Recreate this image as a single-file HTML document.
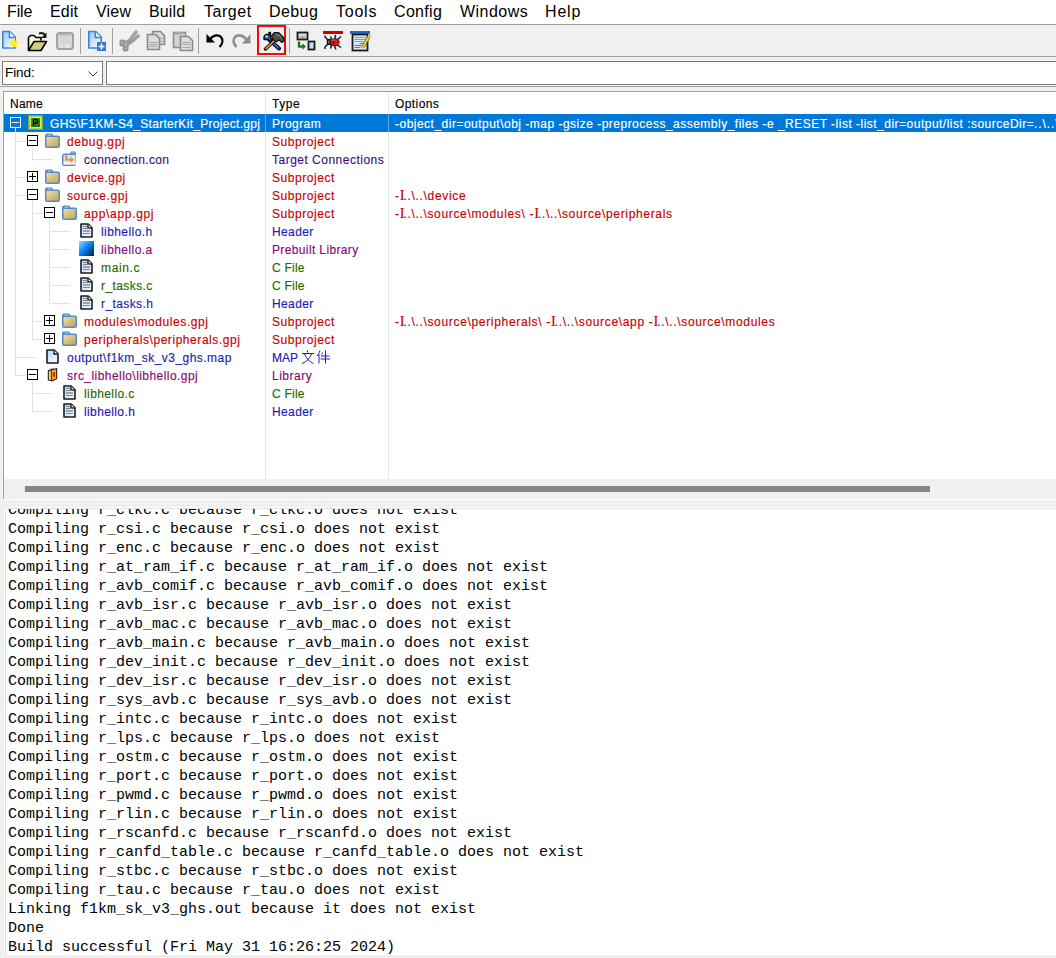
<!DOCTYPE html>
<html><head><meta charset="utf-8">
<style>
*{box-sizing:border-box}
html,body{margin:0;padding:0;width:1056px;height:958px;overflow:hidden;background:#f0f0f0;font-family:"Liberation Sans",sans-serif}
body{position:relative}
.abs,.tx,.ic,.ln,.sep{position:absolute}
.tx{white-space:pre;-webkit-text-stroke:0.15px currentColor}
.sep{width:1px;background:#a0a0a0}
#menu{left:0;top:0;width:1056px;height:24px;background:#fff}
</style></head><body>
<div class="abs" style="left:0;top:0;width:1056px;height:24px;background:#fff"></div>
<div class="abs" style="left:0;top:24px;width:1056px;height:1px;background:#a0a0a0"></div>
<div class="abs" style="left:0;top:56px;width:1056px;height:1px;background:#a0a0a0"></div>
<div class="abs" style="left:0;top:86px;width:1056px;height:1px;background:#a0a0a0"></div>
<svg class="ic" style="left:1px;top:30px" width="21" height="20" viewBox="0 0 21 20"><defs><linearGradient id="nfg" x1="0" y1="0" x2="1" y2="1"><stop offset="0" stop-color="#9cc8f8"/><stop offset="1" stop-color="#ffffff"/></linearGradient></defs><path d="M1.8 1.5h7l5.5 5.5v11H1.8z" fill="url(#nfg)" stroke="#3a82dc" stroke-width="1.6" stroke-linejoin="round"/><path d="M8.3 1.5v6h6" fill="#e8f2ff" stroke="#3a82dc" stroke-width="1.4"/><path d="M13 8l1.5 3.6 3.9.3-3 2.5.9 3.8L13 16.1l-3.3 2.1.9-3.8-3-2.5 3.9-.3z" fill="#fff200" stroke="#f8f070" stroke-width=".5"/></svg>
<svg class="ic" style="left:27px;top:31px" width="21" height="21" viewBox="0 0 21 21"><defs><linearGradient id="ofg" x1="0" y1="0" x2="0" y2="1"><stop offset="0" stop-color="#ffffff"/><stop offset="1" stop-color="#f0f090"/></linearGradient></defs><path d="M1.5 19.5V6.5l2-2h3.5l2 2h5v3" fill="url(#ofg)" stroke="#000" stroke-width="1.6" stroke-linejoin="round"/><path d="M1.5 19.5l5.5-9h12.5l-5.5 9z" fill="#d2cc80" stroke="#000" stroke-width="1.6" stroke-linejoin="round"/><path d="M12 2.5c2.5-1 4.5-.5 6 1.5" fill="none" stroke="#1a1a1a" stroke-width="2"/><path d="M19.5 1.5v5.5h-5.5z" fill="#1a1a1a"/></svg>
<svg class="ic" style="left:56px;top:32px" width="18" height="18" viewBox="0 0 18 18"><defs></defs><rect x="1" y="1" width="16" height="16" rx="2.5" fill="#d6d6d6" stroke="#a2a2a2" stroke-width="2"/><rect x="4" y="1.5" width="10" height="2" fill="#b4b4b4"/><rect x="4" y="12.5" width="3" height="3.5" fill="#e4e4e4"/><rect x="9" y="12.5" width="5" height="3.5" fill="#e4e4e4"/></svg>
<div class="sep" style="left:80px;top:28px;height:26px"></div>
<div class="sep" style="left:112px;top:28px;height:26px"></div>
<div class="sep" style="left:198px;top:28px;height:26px"></div>
<div class="sep" style="left:289px;top:28px;height:26px"></div>
<svg class="ic" style="left:87px;top:30px" width="20" height="22" viewBox="0 0 20 22"><defs></defs><path d="M1.8 1.5h7l5.5 5.5v11H1.8z" fill="url(#nfg)" stroke="#3a82dc" stroke-width="1.6" stroke-linejoin="round"/><path d="M8.3 1.5v6h6" fill="#e8f2ff" stroke="#3a82dc" stroke-width="1.4"/><rect x="10" y="12" width="9" height="9" fill="#2f78d0"/><path d="M14.5 13.5v6M11.5 16.5h6" stroke="#fff" stroke-width="1.6"/></svg>
<svg class="ic" style="left:118px;top:30px" width="22" height="22" viewBox="0 0 22 22"><defs></defs><path d="M11 11L18 2" stroke="#a6a6a6" stroke-width="3.6" stroke-linecap="round"/><path d="M12.5 12.5L20 6" stroke="#a2a2a2" stroke-width="3.6" stroke-linecap="round"/><path d="M4 13L12 11M8 18L12 11" stroke="#9a9a9a" stroke-width="3" stroke-linecap="round"/><rect x="1.5" y="9.5" width="6" height="7" rx="2" fill="#969696"/><rect x="4.5" y="15.5" width="6" height="6" rx="2" fill="#969696"/><circle cx="4.3" cy="12.7" r="1" fill="#b4b4b4"/><circle cx="7.5" cy="18.5" r="1" fill="#b4b4b4"/></svg>
<svg class="ic" style="left:146px;top:30px" width="20" height="21" viewBox="0 0 20 21"><defs></defs><path d="M6.5 1.5h8l4 4v9h-12z" fill="#d8d8d8" stroke="#8a8a8a" stroke-width="1.6"/><path d="M1.5 4.5h8l4 4v11h-12z" fill="#dcdcdc" stroke="#8a8a8a" stroke-width="1.6"/><path d="M3.5 12.5h8M3.5 14.5h8M3.5 16.5h8M14 8.5h3M14 11.5h3" stroke="#a8a8a8" stroke-width="1"/></svg>
<svg class="ic" style="left:172px;top:31px" width="22" height="21" viewBox="0 0 22 21"><defs></defs><rect x="1.5" y="1.5" width="12" height="15" fill="#d2d2d2" stroke="#8c8c8c" stroke-width="1.6"/><rect x="3" y="1" width="8" height="2.5" fill="#a8a8a8"/><path d="M8.5 5.5h8l4 4v10h-12z" fill="#dedede" stroke="#8a8a8a" stroke-width="1.6"/><path d="M10.5 11.5h8M10.5 13.5h8M10.5 16.5h8" stroke="#a6a6a6" stroke-width="1"/></svg>
<svg class="ic" style="left:205px;top:33px" width="20" height="16" viewBox="0 0 20 16"><defs></defs><path d="M5 6.5C7 2.5 13 1 16 4C18.5 7 17.5 11 14.5 14" fill="none" stroke="#000" stroke-width="2.3"/><path d="M1.5 1v8.5h8.5z" fill="#000"/></svg>
<svg class="ic" style="left:232px;top:33px" width="20" height="16" viewBox="0 0 20 16"><defs></defs><path d="M14 6.5C12 2.5 6 1 3 4C0.5 7 1.5 11 4.5 14" fill="none" stroke="#8e8e8e" stroke-width="2.6"/><path d="M18.5 1v9.5h-8.5z" fill="#8e8e8e"/></svg>
<div style="position:absolute;left:257px;top:25px;width:29px;height:30px;border:2px solid #f80808;background:#eef1f2"></div>
<svg class="ic" style="left:263px;top:31px" width="22" height="20" viewBox="0 0 22 20"><defs></defs><path d="M6 8.5L16 17.5" stroke="#000" stroke-width="3.8" stroke-linecap="round"/><path d="M6 8.5L16 17.5" stroke="#2a62d8" stroke-width="2"/><path d="M1 5.5L3 3.5H6V1.5H7.5V7L9.5 9L7.5 11L5 8.5H1z" fill="#2a5ad0" stroke="#000" stroke-width="1.3" stroke-linejoin="round"/><rect x="2.5" y="4.5" width="2" height="2" fill="#e8f0ff"/><path d="M2.5 18L12.5 8.5" stroke="#1a1000" stroke-width="3.4" stroke-linecap="round"/><path d="M2.5 18L12.5 8.5" stroke="#f0a030" stroke-width="1.6"/><path d="M8.5 5L11.5 1.5H15.5L20.5 6.5L21.5 9.5L19 11.5L16 9L13 11L10 8z" fill="#505050" stroke="#111" stroke-width="1.2" stroke-linejoin="round"/><path d="M13 4h3l2 2" stroke="#8a8a8a" stroke-width="1" fill="none"/></svg>
<svg class="ic" style="left:296px;top:31px" width="20" height="20" viewBox="0 0 20 20"><defs></defs><rect x="1.5" y="1.5" width="10" height="7" fill="#c8d8e8" stroke="#1c1c1c" stroke-width="1.8"/><path d="M5 5.5h4v1.5h-5z" fill="#e88a20"/><path d="M3 10.5v5h4" fill="none" stroke="#1e7a1e" stroke-width="2.4"/><path d="M6.5 12.2l3.5 3.3-3.5 3.3z" fill="#1e7a1e"/><rect x="12.5" y="10.5" width="6" height="8" fill="#c4e0fa" stroke="#1c1c1c" stroke-width="1.8"/></svg>
<svg class="ic" style="left:322px;top:30px" width="22" height="21" viewBox="0 0 22 21"><defs></defs><rect x="1" y="1" width="20" height="3" rx="0.5" fill="#d00000"/><path d="M5.5 9.5L3 7V5.5M9.5 9L8.5 6.5M12.5 9L13.5 6.5L13 5M15.5 9.5L19 6.5M5.5 14.5L3 17V19M9.5 15.5L8.5 18.5M12.5 15.5L13.5 18.5L14 19.5M15.5 15L19 17.5" fill="none" stroke="#141414" stroke-width="1.4"/><rect x="4.8" y="9" width="3.8" height="6" fill="#111"/><rect x="6" y="10.5" width="1.6" height="3" fill="#707070"/><path d="M8.5 9H15.5Q19 12 15.5 15.5H8.5z" fill="#e81010" stroke="#1a1a1a" stroke-width="0.9"/><path d="M9.5 10H13" stroke="#ff6060" stroke-width="1"/><ellipse cx="11.5" cy="12.3" rx="0.8" ry="1.3" fill="#000"/></svg>
<svg class="ic" style="left:349px;top:30px" width="22" height="22" viewBox="0 0 22 22"><defs></defs><rect x="1" y="1" width="20" height="3" fill="#1a6ad6"/><rect x="3.5" y="4.5" width="15" height="16" fill="#d8e8f8" stroke="#1c1c1c" stroke-width="1.8"/><path d="M5.5 7.5h11M5.5 9.5h11M5.5 11.5h9" stroke="#8a9aa8" stroke-width="1"/><path d="M10.5 13.5h5M5.5 15.5h7M5.5 17.5h6" stroke="#f04a20" stroke-width="1"/><path d="M13.5 17.5l6.5-11" stroke="#6a5000" stroke-width="3.4"/><path d="M13.5 17.5l6.5-11" stroke="#f6d030" stroke-width="2"/><path d="M20 6.5l1-2" stroke="#f0a0a0" stroke-width="2.5"/></svg>
<div class="abs" style="left:2px;top:61px;width:101px;height:24px;background:#fff;border:1px solid #7a7a7a"></div>
<svg class="ic" style="left:88px;top:71px" width="10" height="6" viewBox="0 0 10 6"><path d="M0.5 0.5l4.5 4.5 4.5-4.5" fill="none" stroke="#404040" stroke-width="1"/></svg>
<span class="tx" style="left:5px;top:65px;font-size:13.6px;line-height:16px;color:#000;letter-spacing:-0.1px;-webkit-text-stroke:0">Find:</span>
<div class="abs" style="left:106px;top:61px;width:960px;height:24px;background:#fff;border:1px solid #7a7a7a"></div>
<div class="abs" style="left:3px;top:91px;width:1060px;height:408px;background:#fff;border-left:1px solid #a0a0a0;border-top:1px solid #a0a0a0"></div>
<div class="abs" style="left:4px;top:114px;width:1052px;height:18px;background:#0078d7"></div>
<div class="ln" style="left:265px;top:92px;width:1px;height:387px;background:#e5e5e5"></div>
<div class="ln" style="left:388px;top:92px;width:1px;height:387px;background:#e5e5e5"></div>
<div class="ln" style="left:265px;top:114px;width:1px;height:18px;background:#5aa6e6"></div>
<div class="ln" style="left:388px;top:114px;width:1px;height:18px;background:#5aa6e6"></div>
<div class="ln" style="left:15px;top:128px;width:1px;height:4px;background:#cfe4f6"></div><div class="ln" style="left:15px;top:132px;width:1px;height:244px;background:#e2e2e2"></div><div class="ln" style="left:15px;top:141px;width:10px;height:1px;background:#e2e2e2"></div><div class="ln" style="left:15px;top:177px;width:10px;height:1px;background:#e2e2e2"></div><div class="ln" style="left:15px;top:195px;width:10px;height:1px;background:#e2e2e2"></div><div class="ln" style="left:15px;top:375px;width:10px;height:1px;background:#e2e2e2"></div><div class="ln" style="left:15px;top:357px;width:21px;height:1px;background:#e2e2e2"></div><div class="ln" style="left:32px;top:146px;width:1px;height:14px;background:#e2e2e2"></div><div class="ln" style="left:32px;top:159px;width:21px;height:1px;background:#e2e2e2"></div><div class="ln" style="left:32px;top:182px;width:1px;height:158px;background:#e2e2e2"></div><div class="ln" style="left:32px;top:213px;width:10px;height:1px;background:#e2e2e2"></div><div class="ln" style="left:32px;top:321px;width:10px;height:1px;background:#e2e2e2"></div><div class="ln" style="left:32px;top:339px;width:10px;height:1px;background:#e2e2e2"></div><div class="ln" style="left:49px;top:218px;width:1px;height:86px;background:#e2e2e2"></div><div class="ln" style="left:49px;top:231px;width:21px;height:1px;background:#e2e2e2"></div><div class="ln" style="left:49px;top:249px;width:21px;height:1px;background:#e2e2e2"></div><div class="ln" style="left:49px;top:267px;width:21px;height:1px;background:#e2e2e2"></div><div class="ln" style="left:49px;top:285px;width:21px;height:1px;background:#e2e2e2"></div><div class="ln" style="left:49px;top:303px;width:21px;height:1px;background:#e2e2e2"></div><div class="ln" style="left:32px;top:380px;width:1px;height:32px;background:#e2e2e2"></div><div class="ln" style="left:32px;top:393px;width:21px;height:1px;background:#e2e2e2"></div><div class="ln" style="left:32px;top:411px;width:21px;height:1px;background:#e2e2e2"></div>
<div style="position:absolute;left:10px;top:117px;width:11px;height:11px;border:1px solid #fff;background:transparent"><div style="position:absolute;left:1px;top:4px;width:7px;height:1px;background:#fff"></div></div><div style="position:absolute;left:27px;top:135px;width:11px;height:11px;border:1px solid #000;background:#fff"><div style="position:absolute;left:1px;top:4px;width:7px;height:1px;background:#000"></div></div><div style="position:absolute;left:27px;top:171px;width:11px;height:11px;border:1px solid #000;background:#fff"><div style="position:absolute;left:1px;top:4px;width:7px;height:1px;background:#000"></div><div style="position:absolute;left:4px;top:1px;width:1px;height:7px;background:#000"></div></div><div style="position:absolute;left:27px;top:189px;width:11px;height:11px;border:1px solid #000;background:#fff"><div style="position:absolute;left:1px;top:4px;width:7px;height:1px;background:#000"></div></div><div style="position:absolute;left:44px;top:207px;width:11px;height:11px;border:1px solid #000;background:#fff"><div style="position:absolute;left:1px;top:4px;width:7px;height:1px;background:#000"></div></div><div style="position:absolute;left:44px;top:315px;width:11px;height:11px;border:1px solid #000;background:#fff"><div style="position:absolute;left:1px;top:4px;width:7px;height:1px;background:#000"></div><div style="position:absolute;left:4px;top:1px;width:1px;height:7px;background:#000"></div></div><div style="position:absolute;left:44px;top:333px;width:11px;height:11px;border:1px solid #000;background:#fff"><div style="position:absolute;left:1px;top:4px;width:7px;height:1px;background:#000"></div><div style="position:absolute;left:4px;top:1px;width:1px;height:7px;background:#000"></div></div><div style="position:absolute;left:27px;top:369px;width:11px;height:11px;border:1px solid #000;background:#fff"><div style="position:absolute;left:1px;top:4px;width:7px;height:1px;background:#000"></div></div>
<svg class="ic" style="left:28px;top:115px" width="15" height="15" viewBox="0 0 15 15"><defs><linearGradient id="pg" x1="0" y1="0" x2="1" y2="1"><stop offset="0" stop-color="#4a9e08"/><stop offset="1" stop-color="#2a6a00"/></linearGradient></defs><rect x="0" y="0" width="15" height="15" fill="#86a82e"/><rect x="1" y="1" width="13" height="13" fill="#a6d460"/><rect x="2" y="2" width="11" height="11" fill="#c4ec8c"/><rect x="3" y="3" width="9" height="9" fill="url(#pg)"/><path d="M5.5 11V4.5h2.4a1.8 1.8 0 0 1 0 3.6H5.5" fill="none" stroke="#000" stroke-width="1.3"/></svg>
<svg class="ic" style="left:45px;top:133px" width="15" height="15" viewBox="0 0 15 15"><defs><linearGradient id="fg" x1="0" y1="0" x2="1" y2="1"><stop offset="0" stop-color="#efe0a0"/><stop offset="1" stop-color="#bfa55a"/></linearGradient></defs><path d="M3 0.5h4l1.5 2H13a2 2 0 0 1 2 2V13a2 2 0 0 1-2 2H2a2 2 0 0 1-2-2V2.5a2 2 0 0 1 2-2z" fill="#4f8ad2"/><rect x="2.5" y="1.5" width="4" height="1.5" fill="#a9b8a8"/><rect x="1.5" y="4" width="12" height="9.5" fill="url(#fg)"/></svg>
<svg class="ic" style="left:62px;top:151px" width="15" height="15" viewBox="0 0 15 15"><defs></defs><path d="M2 2.5h6l1-2h3a2 2 0 0 1 2 2V13a2 2 0 0 1-2 2H2a2 2 0 0 1-2-2V4.5a2 2 0 0 1 2-2z" fill="#4f8ad2"/><rect x="9.5" y="1" width="3" height="1.5" fill="#9ab0c0"/><rect x="1.5" y="4" width="12" height="9.5" fill="#d4e8fc"/><rect x="1.5" y="11" width="12" height="2.5" fill="#eef6ff"/><path d="M3 4.5h2.4v3.3h3.2V5.6l3.4 3.2-3.4 3.2v-2.2H3z" fill="#f29420"/></svg>
<svg class="ic" style="left:45px;top:169px" width="15" height="15" viewBox="0 0 15 15"><defs><linearGradient id="fg" x1="0" y1="0" x2="1" y2="1"><stop offset="0" stop-color="#efe0a0"/><stop offset="1" stop-color="#bfa55a"/></linearGradient></defs><path d="M3 0.5h4l1.5 2H13a2 2 0 0 1 2 2V13a2 2 0 0 1-2 2H2a2 2 0 0 1-2-2V2.5a2 2 0 0 1 2-2z" fill="#4f8ad2"/><rect x="2.5" y="1.5" width="4" height="1.5" fill="#a9b8a8"/><rect x="1.5" y="4" width="12" height="9.5" fill="url(#fg)"/></svg>
<svg class="ic" style="left:45px;top:187px" width="15" height="15" viewBox="0 0 15 15"><defs><linearGradient id="fg" x1="0" y1="0" x2="1" y2="1"><stop offset="0" stop-color="#efe0a0"/><stop offset="1" stop-color="#bfa55a"/></linearGradient></defs><path d="M3 0.5h4l1.5 2H13a2 2 0 0 1 2 2V13a2 2 0 0 1-2 2H2a2 2 0 0 1-2-2V2.5a2 2 0 0 1 2-2z" fill="#4f8ad2"/><rect x="2.5" y="1.5" width="4" height="1.5" fill="#a9b8a8"/><rect x="1.5" y="4" width="12" height="9.5" fill="url(#fg)"/></svg>
<svg class="ic" style="left:62px;top:205px" width="15" height="15" viewBox="0 0 15 15"><defs><linearGradient id="fg" x1="0" y1="0" x2="1" y2="1"><stop offset="0" stop-color="#efe0a0"/><stop offset="1" stop-color="#bfa55a"/></linearGradient></defs><path d="M3 0.5h4l1.5 2H13a2 2 0 0 1 2 2V13a2 2 0 0 1-2 2H2a2 2 0 0 1-2-2V2.5a2 2 0 0 1 2-2z" fill="#4f8ad2"/><rect x="2.5" y="1.5" width="4" height="1.5" fill="#a9b8a8"/><rect x="1.5" y="4" width="12" height="9.5" fill="url(#fg)"/></svg>
<svg class="ic" style="left:80px;top:223px" width="13" height="15" viewBox="0 0 13 15"><defs><linearGradient id="flg" x1="0" y1="0" x2="1" y2="1"><stop offset="0" stop-color="#b8d8fa"/><stop offset="1" stop-color="#f4faff"/></linearGradient></defs><path d="M1 1h7.2L12 4.8V14H1z" fill="url(#flg)" stroke="#1c1c1c" stroke-width="1.6" stroke-linejoin="round"/><path d="M8 1.2V5h3.8" fill="#fff" stroke="#1c1c1c" stroke-width="1.4"/><rect x="3" y="3" width="4" height="1" fill="#7c8a98"/><rect x="3" y="5" width="6.5" height="1" fill="#7c8a98"/><rect x="3" y="7" width="7" height="2" fill="#98a4b0"/><rect x="3" y="10" width="7" height="1" fill="#7c8a98"/></svg>
<svg class="ic" style="left:79px;top:241px" width="15" height="15" viewBox="0 0 15 15"><defs><linearGradient id="lg" x1="0" y1="0" x2="1" y2="1"><stop offset="0" stop-color="#a8d4ff"/><stop offset="0.45" stop-color="#0a86ff"/><stop offset="1" stop-color="#001c44"/></linearGradient></defs><rect x="0" y="0" width="15" height="15" fill="url(#lg)"/></svg>
<svg class="ic" style="left:80px;top:259px" width="13" height="15" viewBox="0 0 13 15"><defs><linearGradient id="flg" x1="0" y1="0" x2="1" y2="1"><stop offset="0" stop-color="#b8d8fa"/><stop offset="1" stop-color="#f4faff"/></linearGradient></defs><path d="M1 1h7.2L12 4.8V14H1z" fill="url(#flg)" stroke="#1c1c1c" stroke-width="1.6" stroke-linejoin="round"/><path d="M8 1.2V5h3.8" fill="#fff" stroke="#1c1c1c" stroke-width="1.4"/><rect x="3" y="3" width="4" height="1" fill="#7c8a98"/><rect x="3" y="5" width="6.5" height="1" fill="#7c8a98"/><rect x="3" y="7" width="7" height="2" fill="#98a4b0"/><rect x="3" y="10" width="7" height="1" fill="#7c8a98"/></svg>
<svg class="ic" style="left:80px;top:277px" width="13" height="15" viewBox="0 0 13 15"><defs><linearGradient id="flg" x1="0" y1="0" x2="1" y2="1"><stop offset="0" stop-color="#b8d8fa"/><stop offset="1" stop-color="#f4faff"/></linearGradient></defs><path d="M1 1h7.2L12 4.8V14H1z" fill="url(#flg)" stroke="#1c1c1c" stroke-width="1.6" stroke-linejoin="round"/><path d="M8 1.2V5h3.8" fill="#fff" stroke="#1c1c1c" stroke-width="1.4"/><rect x="3" y="3" width="4" height="1" fill="#7c8a98"/><rect x="3" y="5" width="6.5" height="1" fill="#7c8a98"/><rect x="3" y="7" width="7" height="2" fill="#98a4b0"/><rect x="3" y="10" width="7" height="1" fill="#7c8a98"/></svg>
<svg class="ic" style="left:80px;top:295px" width="13" height="15" viewBox="0 0 13 15"><defs><linearGradient id="flg" x1="0" y1="0" x2="1" y2="1"><stop offset="0" stop-color="#b8d8fa"/><stop offset="1" stop-color="#f4faff"/></linearGradient></defs><path d="M1 1h7.2L12 4.8V14H1z" fill="url(#flg)" stroke="#1c1c1c" stroke-width="1.6" stroke-linejoin="round"/><path d="M8 1.2V5h3.8" fill="#fff" stroke="#1c1c1c" stroke-width="1.4"/><rect x="3" y="3" width="4" height="1" fill="#7c8a98"/><rect x="3" y="5" width="6.5" height="1" fill="#7c8a98"/><rect x="3" y="7" width="7" height="2" fill="#98a4b0"/><rect x="3" y="10" width="7" height="1" fill="#7c8a98"/></svg>
<svg class="ic" style="left:62px;top:313px" width="15" height="15" viewBox="0 0 15 15"><defs><linearGradient id="fg" x1="0" y1="0" x2="1" y2="1"><stop offset="0" stop-color="#efe0a0"/><stop offset="1" stop-color="#bfa55a"/></linearGradient></defs><path d="M3 0.5h4l1.5 2H13a2 2 0 0 1 2 2V13a2 2 0 0 1-2 2H2a2 2 0 0 1-2-2V2.5a2 2 0 0 1 2-2z" fill="#4f8ad2"/><rect x="2.5" y="1.5" width="4" height="1.5" fill="#a9b8a8"/><rect x="1.5" y="4" width="12" height="9.5" fill="url(#fg)"/></svg>
<svg class="ic" style="left:62px;top:331px" width="15" height="15" viewBox="0 0 15 15"><defs><linearGradient id="fg" x1="0" y1="0" x2="1" y2="1"><stop offset="0" stop-color="#efe0a0"/><stop offset="1" stop-color="#bfa55a"/></linearGradient></defs><path d="M3 0.5h4l1.5 2H13a2 2 0 0 1 2 2V13a2 2 0 0 1-2 2H2a2 2 0 0 1-2-2V2.5a2 2 0 0 1 2-2z" fill="#4f8ad2"/><rect x="2.5" y="1.5" width="4" height="1.5" fill="#a9b8a8"/><rect x="1.5" y="4" width="12" height="9.5" fill="url(#fg)"/></svg>
<svg class="ic" style="left:46px;top:349px" width="13" height="15" viewBox="0 0 13 15"><defs><linearGradient id="mg" x1="0" y1="0" x2="0.6" y2="1"><stop offset="0" stop-color="#b6d6fa"/><stop offset="1" stop-color="#f0f8ff"/></linearGradient></defs><path d="M1 1h7.2L12 4.8V14H1z" fill="url(#mg)" stroke="#1c1c1c" stroke-width="1.6" stroke-linejoin="round"/><path d="M8 1.2V5h3.8" fill="#fff" stroke="#1c1c1c" stroke-width="1.4"/></svg>
<svg class="ic" style="left:47px;top:367px" width="11" height="15" viewBox="0 0 11 15"><defs></defs><path d="M0.8 3.5L4 1.8L10.2 1V12L5 14.6L0.8 13.2z" fill="#111"/><path d="M1.8 4.2L3.8 3.4V13.4L1.8 12.6z" fill="#ffd870"/><path d="M4.6 3.2L9.2 2.2V11.4L4.6 13.6z" fill="#f6a814"/><path d="M5.8 5.5L8 5V10L6.9 9.2L5.8 10.4z" fill="#d42a00"/><path d="M1.5 3.2L3.5 1.6L5.5 1.4L3.8 3z" fill="#9a9a9a"/><path d="M5.5 1.2L8 0.6L9.6 1.2L7 1.8z" fill="#b8b8b8"/></svg>
<svg class="ic" style="left:63px;top:385px" width="13" height="15" viewBox="0 0 13 15"><defs><linearGradient id="flg" x1="0" y1="0" x2="1" y2="1"><stop offset="0" stop-color="#b8d8fa"/><stop offset="1" stop-color="#f4faff"/></linearGradient></defs><path d="M1 1h7.2L12 4.8V14H1z" fill="url(#flg)" stroke="#1c1c1c" stroke-width="1.6" stroke-linejoin="round"/><path d="M8 1.2V5h3.8" fill="#fff" stroke="#1c1c1c" stroke-width="1.4"/><rect x="3" y="3" width="4" height="1" fill="#7c8a98"/><rect x="3" y="5" width="6.5" height="1" fill="#7c8a98"/><rect x="3" y="7" width="7" height="2" fill="#98a4b0"/><rect x="3" y="10" width="7" height="1" fill="#7c8a98"/></svg>
<svg class="ic" style="left:63px;top:403px" width="13" height="15" viewBox="0 0 13 15"><defs><linearGradient id="flg" x1="0" y1="0" x2="1" y2="1"><stop offset="0" stop-color="#b8d8fa"/><stop offset="1" stop-color="#f4faff"/></linearGradient></defs><path d="M1 1h7.2L12 4.8V14H1z" fill="url(#flg)" stroke="#1c1c1c" stroke-width="1.6" stroke-linejoin="round"/><path d="M8 1.2V5h3.8" fill="#fff" stroke="#1c1c1c" stroke-width="1.4"/><rect x="3" y="3" width="4" height="1" fill="#7c8a98"/><rect x="3" y="5" width="6.5" height="1" fill="#7c8a98"/><rect x="3" y="7" width="7" height="2" fill="#98a4b0"/><rect x="3" y="10" width="7" height="1" fill="#7c8a98"/></svg>
<svg class="ic" style="left:301px;top:350px" width="30" height="14" viewBox="0 0 30 14"><g fill="none" stroke="#1c1cb4" stroke-width="1"><path d="M6.5 0.5v2M1 3.5h12M3.5 4c1.5 4 4.5 7.5 9 9.5M10.5 4c-1.5 4-4.5 7.5-9.5 9.5"/><path d="M19 0.5c-.8 2.5-1.8 4-3 5.5M18 4v9.5M21.5 2.5l-.8 2M20 6h8.5M19.5 9h9.5M24.5 0.5v13"/></g></svg>
<span class="tx" style="left:7px;top:2px;font-size:16px;line-height:20px;color:#000;letter-spacing:-0.145px;-webkit-text-stroke:0">File</span><span class="tx" style="left:50px;top:2px;font-size:16px;line-height:20px;color:#000;letter-spacing:0.155px;-webkit-text-stroke:0">Edit</span><span class="tx" style="left:96px;top:2px;font-size:16px;line-height:20px;color:#000;letter-spacing:0.202px;-webkit-text-stroke:0">View</span><span class="tx" style="left:149px;top:2px;font-size:16px;line-height:20px;color:#000;letter-spacing:0.124px;-webkit-text-stroke:0">Build</span><span class="tx" style="left:204px;top:2px;font-size:16px;line-height:20px;color:#000;letter-spacing:0.539px;-webkit-text-stroke:0">Target</span><span class="tx" style="left:269px;top:2px;font-size:16px;line-height:20px;color:#000;letter-spacing:0.409px;-webkit-text-stroke:0">Debug</span><span class="tx" style="left:336px;top:2px;font-size:16px;line-height:20px;color:#000;letter-spacing:0.768px;-webkit-text-stroke:0">Tools</span><span class="tx" style="left:394px;top:2px;font-size:16px;line-height:20px;color:#000;letter-spacing:0.325px;-webkit-text-stroke:0">Config</span><span class="tx" style="left:460px;top:2px;font-size:16px;line-height:20px;color:#000;letter-spacing:0.471px;-webkit-text-stroke:0">Windows</span><span class="tx" style="left:545px;top:2px;font-size:16px;line-height:20px;color:#000;letter-spacing:0.823px;-webkit-text-stroke:0">Help</span><span class="tx" style="left:10px;top:96px;font-size:12px;line-height:16px;color:#000;letter-spacing:0.246px;">Name</span><span class="tx" style="left:272px;top:96px;font-size:12px;line-height:16px;color:#000;letter-spacing:0.546px;">Type</span><span class="tx" style="left:395px;top:96px;font-size:12px;line-height:16px;color:#000;letter-spacing:0.406px;">Options</span><span class="tx" style="left:50px;top:115px;font-size:12px;line-height:18px;color:#fff;letter-spacing:0.298px;">GHS\F1KM-S4_StarterKit_Project.gpj</span><span class="tx" style="left:272px;top:115px;font-size:12px;line-height:18px;color:#fff;letter-spacing:0.455px;">Program</span><span class="tx" style="left:395px;top:115px;font-size:12px;line-height:18px;color:#fff;letter-spacing:0.488px;">-object_dir=output\obj -map -gsize -preprocess_assembly_files -e _RESET -list -list_dir=output/list :sourceDir=</span><span class="tx" style="left:1034px;top:115px;font-size:12px;line-height:18px;color:#fff;letter-spacing:0.000px;letter-spacing:0.9px">..\..\source</span><span class="tx" style="left:67px;top:133px;font-size:12px;line-height:18px;color:#c80000;letter-spacing:0.609px;">debug.gpj</span><span class="tx" style="left:272px;top:133px;font-size:12px;line-height:18px;color:#c80000;letter-spacing:0.543px;">Subproject</span><span class="tx" style="left:84px;top:151px;font-size:12px;line-height:18px;color:#3f0f7a;letter-spacing:0.319px;">connection.con</span><span class="tx" style="left:272px;top:151px;font-size:12px;line-height:18px;color:#3f0f7a;letter-spacing:0.489px;">Target Connections</span><span class="tx" style="left:67px;top:169px;font-size:12px;line-height:18px;color:#c80000;letter-spacing:0.465px;">device.gpj</span><span class="tx" style="left:272px;top:169px;font-size:12px;line-height:18px;color:#c80000;letter-spacing:0.543px;">Subproject</span><span class="tx" style="left:67px;top:187px;font-size:12px;line-height:18px;color:#c80000;letter-spacing:0.583px;">source.gpj</span><span class="tx" style="left:272px;top:187px;font-size:12px;line-height:18px;color:#c80000;letter-spacing:0.543px;">Subproject</span><span class="tx" style="left:395px;top:187px;font-size:12px;line-height:18px;color:#c80000;letter-spacing:0.683px;">-<span style="font-family:'Liberation Serif';font-size:14.5px;line-height:0;letter-spacing:-1.1px">I</span>..\..\device</span><span class="tx" style="left:84px;top:205px;font-size:12px;line-height:18px;color:#c80000;letter-spacing:0.679px;">app\app.gpj</span><span class="tx" style="left:272px;top:205px;font-size:12px;line-height:18px;color:#c80000;letter-spacing:0.543px;">Subproject</span><span class="tx" style="left:395px;top:205px;font-size:12px;line-height:18px;color:#c80000;letter-spacing:0.669px;">-<span style="font-family:'Liberation Serif';font-size:14.5px;line-height:0;letter-spacing:-1.1px">I</span>..\..\source\modules\ -<span style="font-family:'Liberation Serif';font-size:14.5px;line-height:0;letter-spacing:-1.1px">I</span>..\..\source\peripherals</span><span class="tx" style="left:101px;top:223px;font-size:12px;line-height:18px;color:#1c1cb4;letter-spacing:0.423px;">libhello.h</span><span class="tx" style="left:272px;top:223px;font-size:12px;line-height:18px;color:#1c1cb4;letter-spacing:0.390px;">Header</span><span class="tx" style="left:101px;top:241px;font-size:12px;line-height:18px;color:#86087a;letter-spacing:0.423px;">libhello.a</span><span class="tx" style="left:272px;top:241px;font-size:12px;line-height:18px;color:#86087a;letter-spacing:0.369px;">Prebuilt Library</span><span class="tx" style="left:101px;top:259px;font-size:12px;line-height:18px;color:#226a00;letter-spacing:0.643px;">main.c</span><span class="tx" style="left:272px;top:259px;font-size:12px;line-height:18px;color:#226a00;letter-spacing:0.226px;">C File</span><span class="tx" style="left:101px;top:277px;font-size:12px;line-height:18px;color:#226a00;letter-spacing:0.420px;">r_tasks.c</span><span class="tx" style="left:272px;top:277px;font-size:12px;line-height:18px;color:#226a00;letter-spacing:0.226px;">C File</span><span class="tx" style="left:101px;top:295px;font-size:12px;line-height:18px;color:#1c1cb4;letter-spacing:0.390px;">r_tasks.h</span><span class="tx" style="left:272px;top:295px;font-size:12px;line-height:18px;color:#1c1cb4;letter-spacing:0.390px;">Header</span><span class="tx" style="left:84px;top:313px;font-size:12px;line-height:18px;color:#c80000;letter-spacing:0.589px;">modules\modules.gpj</span><span class="tx" style="left:272px;top:313px;font-size:12px;line-height:18px;color:#c80000;letter-spacing:0.543px;">Subproject</span><span class="tx" style="left:395px;top:313px;font-size:12px;line-height:18px;color:#c80000;letter-spacing:0.672px;">-<span style="font-family:'Liberation Serif';font-size:14.5px;line-height:0;letter-spacing:-1.1px">I</span>..\..\source\peripherals\ -<span style="font-family:'Liberation Serif';font-size:14.5px;line-height:0;letter-spacing:-1.1px">I</span>..\..\source\app -<span style="font-family:'Liberation Serif';font-size:14.5px;line-height:0;letter-spacing:-1.1px">I</span>..\..\source\modules</span><span class="tx" style="left:84px;top:331px;font-size:12px;line-height:18px;color:#c80000;letter-spacing:0.558px;">peripherals\peripherals.gpj</span><span class="tx" style="left:272px;top:331px;font-size:12px;line-height:18px;color:#c80000;letter-spacing:0.543px;">Subproject</span><span class="tx" style="left:67px;top:349px;font-size:12px;line-height:18px;color:#1c1cb4;letter-spacing:0.455px;">output\f1km_sk_v3_ghs.map</span><span class="tx" style="left:272px;top:349px;font-size:12px;line-height:18px;color:#1c1cb4;letter-spacing:0.000px;">MAP</span><span class="tx" style="left:67px;top:367px;font-size:12px;line-height:18px;color:#8a0868;letter-spacing:0.445px;">src_libhello\libhello.gpj</span><span class="tx" style="left:272px;top:367px;font-size:12px;line-height:18px;color:#8a0868;letter-spacing:0.502px;">Library</span><span class="tx" style="left:84px;top:385px;font-size:12px;line-height:18px;color:#226a00;letter-spacing:0.400px;">libhello.c</span><span class="tx" style="left:272px;top:385px;font-size:12px;line-height:18px;color:#226a00;letter-spacing:0.226px;">C File</span><span class="tx" style="left:84px;top:403px;font-size:12px;line-height:18px;color:#1c1cb4;letter-spacing:0.383px;">libhello.h</span><span class="tx" style="left:272px;top:403px;font-size:12px;line-height:18px;color:#1c1cb4;letter-spacing:0.390px;">Header</span>
<div class="abs" style="left:4px;top:479px;width:1052px;height:20px;background:#f0f0f0"></div>
<div class="abs" style="left:25px;top:486px;width:905px;height:6px;background:#858585"></div>
<div class="abs" style="left:3px;top:499px;width:1053px;height:1px;background:#fff"></div>
<div class="abs" style="left:4px;top:507px;width:1052px;height:1px;background:#fff"></div>
<div class="abs" style="left:4px;top:507px;width:1px;height:448px;background:#fff"></div>
<div class="abs" style="left:5px;top:508px;width:1060px;height:447px;background:#fff;border-left:1px solid #e3e3e3;border-top:1px solid #e3e3e3;overflow:hidden">
<pre style="position:absolute;margin:0;left:2px;top:-8px;font-family:'Liberation Mono',monospace;font-size:15px;line-height:19px;color:#000">Compiling r_clkc.c because r_clkc.o does not exist
Compiling r_csi.c because r_csi.o does not exist
Compiling r_enc.c because r_enc.o does not exist
Compiling r_at_ram_if.c because r_at_ram_if.o does not exist
Compiling r_avb_comif.c because r_avb_comif.o does not exist
Compiling r_avb_isr.c because r_avb_isr.o does not exist
Compiling r_avb_mac.c because r_avb_mac.o does not exist
Compiling r_avb_main.c because r_avb_main.o does not exist
Compiling r_dev_init.c because r_dev_init.o does not exist
Compiling r_dev_isr.c because r_dev_isr.o does not exist
Compiling r_sys_avb.c because r_sys_avb.o does not exist
Compiling r_intc.c because r_intc.o does not exist
Compiling r_lps.c because r_lps.o does not exist
Compiling r_ostm.c because r_ostm.o does not exist
Compiling r_port.c because r_port.o does not exist
Compiling r_pwmd.c because r_pwmd.o does not exist
Compiling r_rlin.c because r_rlin.o does not exist
Compiling r_rscanfd.c because r_rscanfd.o does not exist
Compiling r_canfd_table.c because r_canfd_table.o does not exist
Compiling r_stbc.c because r_stbc.o does not exist
Compiling r_tau.c because r_tau.o does not exist
Linking f1km_sk_v3_ghs.out because it does not exist
Done
Build successful (Fri May 31 16:26:25 2024)</pre>
</div>
</body></html>
